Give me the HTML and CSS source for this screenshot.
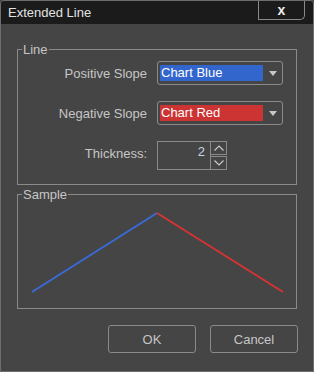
FILE: index.html
```html
<!DOCTYPE html>
<html lang="en">
<head>
    <meta charset="UTF-8">
    <title>Extended Line</title>
    <link rel="stylesheet" href="styles.css">
</head>
<body>
    <div class="window">
        <div class="titlebar">
            <span class="title">Extended Line</span>
            <button class="close">x</button>
        </div>

        <div class="content">
            <fieldset class="group line-group">
                <legend>Line</legend>
                <div class="form-grid">
                    <label>Positive Slope</label>
                    <div class="select">
                        <span class="swatch blue">Chart Blue</span>
                        <span class="arrow">
                            <svg width="8" height="5" viewBox="0 0 8 5"><polygon points="0,0 8,0 4,5" /></svg>
                        </span>
                    </div>

                    <label>Negative Slope</label>
                    <div class="select">
                        <span class="swatch red">Chart Red</span>
                        <span class="arrow">
                            <svg width="8" height="5" viewBox="0 0 8 5"><polygon points="0,0 8,0 4,5" /></svg>
                        </span>
                    </div>

                    <label class="thick-label">Thickness:</label>
                    <div class="spin">
                        <span class="spin-value">2</span>
                        <div class="spin-buttons">
                            <span class="spin-btn up">
                                <svg width="10" height="6" viewBox="0 0 10 6"><polyline points="0.5,5.5 5,1 9.5,5.5" /></svg>
                            </span>
                            <span class="spin-btn down">
                                <svg width="10" height="6" viewBox="0 0 10 6"><polyline points="0.5,0.5 5,5 9.5,0.5" /></svg>
                            </span>
                        </div>
                    </div>
                </div>
            </fieldset>

            <fieldset class="group sample-group">
                <legend>Sample</legend>
                <svg class="sample" width="278" height="106" viewBox="0 0 278 106">
                    <line x1="14" y1="90" x2="139" y2="11" stroke="#3a6ad6" stroke-width="2" />
                    <line x1="139" y1="11" x2="265" y2="90" stroke="#d63333" stroke-width="2" />
                </svg>
            </fieldset>

            <div class="buttons">
                <button class="btn">OK</button>
                <button class="btn">Cancel</button>
            </div>
        </div>
    </div>
</body>
</html>
```

FILE: styles.css
```css
:root {
    --bg: #454545;
    --title-bg: #1b1b1b;
    --border: #8a8a8a;
    --text: #c6c6c6;
}

* {
    box-sizing: border-box;
    margin: 0;
    padding: 0;
}

body {
    font-family: 'Liberation Sans', Arial, sans-serif;
    font-size: 13px;
    background: var(--bg);
    color: var(--text);
}

.window {
    width: 314px;
    height: 372px;
    border: 1px solid #6e6e6e;
    border-radius: 4px 4px 0 0;
    background: var(--bg);
    display: flex;
    flex-direction: column;
    overflow: hidden;
}

.titlebar {
    height: 23px;
    background: var(--title-bg);
    display: flex;
    justify-content: space-between;
    align-items: flex-start;
    padding: 0 8px 0 7px;
}

.title {
    line-height: 23px;
    color: #e2e2e2;
}

.close {
    width: 47px;
    height: 19px;
    border: 1px solid var(--border);
    border-top: none;
    border-radius: 0 0 5px 0;
    background: transparent;
    color: #eeeeee;
    font-family: 'Liberation Sans', Arial, sans-serif;
    font-size: 14px;
    font-weight: bold;
    line-height: 14px;
}

.content {
    padding: 0 16px;
}

.group {
    border: 1px solid var(--border);
}

.group legend {
    margin-left: 4px;
    padding: 0 1px;
    line-height: 15px;
}

.line-group {
    margin-top: 18px;
    padding: 4px 0 14px 0;
}

.form-grid {
    display: grid;
    grid-template-columns: 129px 126px;
    column-gap: 10px;
    row-gap: 16px;
    align-items: center;
}

.form-grid label {
    text-align: right;
}

.form-grid .thick-label {
    margin-bottom: 4px;
}

.select {
    display: flex;
    height: 24px;
    border: 1px solid var(--border);
    border-radius: 3px;
    padding: 3px 0 3px 2px;
}

.swatch {
    width: 103px;
    height: 16px;
    line-height: 16px;
    padding-left: 1px;
    color: #ffffff;
}

.swatch.blue {
    background: #3366cc;
}

.swatch.red {
    background: #cc3333;
}

.arrow {
    flex: 1;
    display: flex;
    align-items: center;
    justify-content: center;
    padding-top: 1px;
}

.arrow svg {
    fill: #c8c8c8;
}

.spin {
    display: flex;
    width: 70px;
    height: 29px;
}

.spin-value {
    width: 54px;
    border: 1px solid var(--border);
    text-align: right;
    padding: 2px 5px 0 0;
    line-height: 15px;
    color: #c8d4e2;
}

.spin-buttons {
    width: 16px;
    display: flex;
    flex-direction: column;
}

.spin-btn {
    height: 14px;
    border: 1px solid var(--border);
    border-left: none;
    display: flex;
    align-items: center;
    justify-content: center;
}

.spin-btn.down {
    margin-top: 1px;
}

.spin-btn svg {
    fill: none;
    stroke: #c8c8c8;
    stroke-width: 1.2;
}

.sample-group {
    margin-top: 2px;
    padding: 0;
}

.sample {
    display: block;
}

.buttons {
    display: flex;
    justify-content: flex-end;
    gap: 14px;
    margin-top: 16px;
    margin-right: -1px;
}

.btn {
    width: 88px;
    height: 28px;
    border: 1px solid var(--border);
    border-radius: 3px;
    background: transparent;
    color: var(--text);
    font-family: 'Liberation Sans', Arial, sans-serif;
    font-size: 13px;
}
```
